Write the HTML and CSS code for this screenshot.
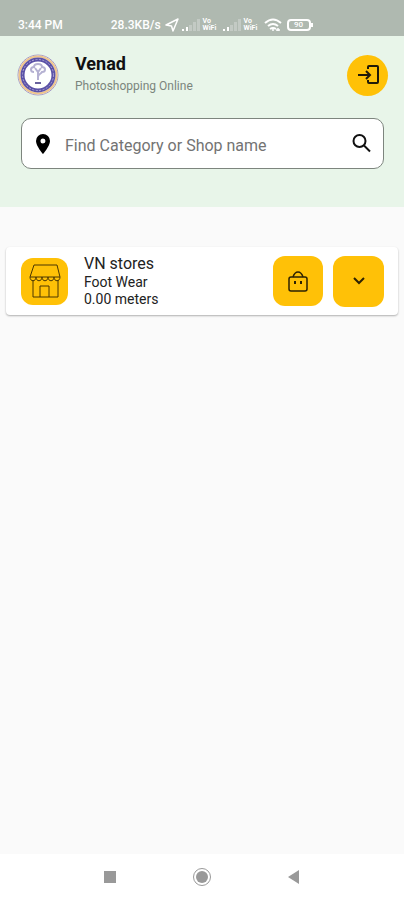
FILE: index.html
```html
<!DOCTYPE html>
<html lang="en">
<head>
  <meta charset="UTF-8" />
  <meta name="viewport" content="width=device-width, initial-scale=1.0" />
  <title>Venad</title>
  <link rel="stylesheet" href="styles.css">
</head>
<body>
  <div class="status-bar">
    <span class="time">3:44 PM</span>
    <span class="speed">28.3KB/s</span>
    <div class="status-icons">
      <svg width="14" height="14" viewBox="0 0 14 14"><path d="M1 7 13 1 8 13 6.500 8Z" fill="none" stroke="#fff" stroke-width="1.500" stroke-linejoin="round"/></svg>
      <svg width="18" height="12" viewBox="0 0 18 12" fill="#fff"><path d="M0 10h2v2H0zM4 8h2v4H4z"/><path d="M7 6h3v6H7zM11 3h3v9h-3zM15 0h3v12h-3z" opacity=".25"/></svg>
      <span class="vowifi">Vo<br>WiFi</span>
      <svg width="18" height="12" viewBox="0 0 18 12" fill="#fff"><path d="M0 10h2v2H0zM4 8h2v4H4z"/><path d="M7 6h3v6H7zM11 3h3v9h-3zM15 0h3v12h-3z" opacity=".25"/></svg>
      <span class="vowifi">Vo<br>WiFi</span>
      <svg width="18" height="14" viewBox="0 0 18 14" fill="none" stroke="#fff" stroke-width="2"><path d="M1 5Q9-2 17 5M4 8q5-4 10 0M6 11q3-2 6 0"/><path d="M9 11v2M14 10v3M12 12h4" stroke-width="1.500"/></svg>
      <span class="battery">90</span>
    </div>
  </div>

  <header>
    <div class="profile">
      <svg class="logo" width="42" height="42" viewBox="0 0 42 42">
        <circle cx="21" cy="21" r="20" fill="#fff" stroke="#a59cc8" stroke-width="1"/>
        <circle cx="21" cy="21" r="18.500" fill="none" stroke="#efc58c" stroke-width="2"/>
        <circle cx="21" cy="21" r="15.500" fill="#fff" stroke="#5b51a6" stroke-width="4"/>
        <circle cx="21" cy="21" r="15.500" fill="none" stroke="#a9a3d4" stroke-width="1" stroke-dasharray="2 1.500"/>
        <path d="M17 18c-4 0-4-5 0-5 0-4 8-4 8 0 4 0 4 5 0 5-1 2-4 2-4 5v3M18 14l3 4 3-4M21 17v7" fill="none" stroke="#b5b1d2" stroke-width="2"/>
        <path d="M18 29h6" stroke="#69629d" stroke-width="2"/>
      </svg>
      <div class="profile-text">
        <h1>Venad</h1>
        <p>Photoshopping Online</p>
      </div>
      <button class="login" type="button" aria-label="Log in">
        <svg width="24" height="24" viewBox="0 0 24 24" fill="none" stroke="#201a08" stroke-width="2"><path d="M12 6V4q0-1 1-1h8q1 0 1 1v15q0 1-1 1h-8q-1 0-1-1v-2M2 12h12M10 8l4 4-4 4"/></svg>
      </button>
    </div>

    <form class="search">
      <svg width="24" height="24" viewBox="0 0 24 24"><path d="M12 2a7 7 0 0 0-7 7c0 5 7 13 7 13s7-8 7-13a7 7 0 0 0-7-7zm0 9.500a2.500 2.500 0 1 1 0-5 2.500 2.500 0 0 1 0 5z"/></svg>
      <input type="text" aria-label="Find Category or Shop name" placeholder="Find Category or Shop name">
      <button type="submit" aria-label="Search">
        <svg width="24" height="24" viewBox="0 0 24 24" fill="none" stroke="#111" stroke-width="2"><circle cx="9.500" cy="9" r="6"/><path d="m14 13.500 6 6"/></svg>
      </button>
    </form>
  </header>

  <main>
    <article class="store">
      <div class="store-icon">
        <svg width="34" height="36" viewBox="0 0 34 36" fill="none" stroke="#4a3703" stroke-width="1"><path d="M6 2h23l3 12H2zM2 14c0 5 6 5 6 0 0 5 6 5 6 0 0 5 6 5 6 0 0 5 6 5 6 0 0 5 6 5 6 0M5 17v17h25V17M12 34V23h9v11"/></svg>
      </div>
      <div class="store-text">
        <h2>VN stores</h2>
        <p>Foot Wear</p>
        <p>0.00 meters</p>
      </div>
      <button class="bag" type="button" aria-label="Shop">
        <svg width="20" height="22" viewBox="0 0 20 22" fill="none" stroke="#2d2203" stroke-width="1.500"><rect x="1" y="7" width="18" height="14" rx="2"/><path d="M5 7c1-3 2-5 5-5s4 2 5 5"/><path d="M7 11v3M13 11v3" stroke-width="2"/></svg>
      </button>
      <button class="expand" type="button" aria-label="Show more">
        <svg width="12" height="8" viewBox="0 0 12 8" fill="none" stroke="#2d2203" stroke-width="2"><path d="m1 1 5 5 5-5"/></svg>
      </button>
    </article>
  </main>

  <nav>
    <button type="button" aria-label="Recent apps"><svg width="20" height="20" viewBox="0 0 20 20"><path d="M4 4h12v12H4z" fill="#999"/></svg></button>
    <button type="button" aria-label="Home"><svg width="20" height="20" viewBox="0 0 20 20"><circle cx="10" cy="10" r="8.500" fill="none" stroke="#999" stroke-width="1"/><circle cx="10" cy="10" r="6" fill="#999"/></svg></button>
    <button type="button" aria-label="Back"><svg width="20" height="20" viewBox="0 0 20 20"><path d="M15 3v14L4 10z" fill="#999"/></svg></button>
  </nav>
</body>
</html>
```

FILE: styles.css
```css
* {
  box-sizing: border-box;
}
body {
  margin: 0;
  min-height: 100vh;
  display: flex;
  flex-direction: column;
  font-family: Roboto, "Liberation Sans", sans-serif;
  background-color: #fafafa;
  color: #222;
}
h1, h2, p {
  margin: 0;
  font-weight: 400;
}
svg {
  display: block;
  flex: none;
}
button {
  display: flex;
  align-items: center;
  justify-content: center;
  flex: none;
  border: 0;
  padding: 0;
  background: none;
}
.status-bar {
  display: flex;
  align-items: center;
  height: 36px;
  padding: 14px 20px 0 18px;
  background-color: #afb9b0;
  color: #fff;
  font-size: 12px;
  font-weight: 500;
}
.speed {
  margin-left: 48px;
}
.status-icons {
  display: flex;
  align-items: center;
  gap: 3px;
  margin-left: 4px;
}
.vowifi {
  width: 17px;
  font-size: 7px;
  line-height: 7px;
  font-weight: 700;
}
.battery {
  position: relative;
  width: 24px;
  height: 12px;
  margin-left: 2px;
  border: 2px solid #fff;
  border-radius: 4px;
  font-size: 8px;
  line-height: 8px;
  text-align: center;
}
.battery::after {
  content: "";
  position: absolute;
  right: -4px;
  top: 2px;
  width: 2px;
  height: 4px;
  background-color: #fff;
}
header {
  padding: 17px 20px 38px 21px;
  background-color: #e8f5e9;
}
.profile {
  display: flex;
  align-items: center;
  margin: 0 -4px;
}
.profile-text {
  flex: 1;
  margin-left: 16px;
}
.profile h1 {
  font-size: 18px;
  line-height: 22px;
  font-weight: 700;
  color: #111;
}
.profile p {
  font-size: 12px;
  line-height: 22px;
  color: #7b857d;
}
.login {
  width: 41px;
  height: 41px;
  border-radius: 50%;
  background-color: #ffc107;
}
.search {
  display: flex;
  align-items: center;
  height: 51px;
  margin-top: 21px;
  padding: 0 9px;
  border: 1px solid #7d857e;
  border-radius: 10px;
  background-color: #fff;
}
.search input {
  flex: 1;
  min-width: 0;
  margin-left: 10px;
  padding: 4px 0 0;
  border: 0;
  outline: 0;
  background: none;
  font: inherit;
  font-size: 16px;
  line-height: 20px;
}
.search input::placeholder {
  color: #737373;
  opacity: 1;
}
main {
  flex: 1;
  padding: 40px 6px;
}
.store {
  display: flex;
  align-items: center;
  height: 68px;
  padding: 0 14px 0 15px;
  border-radius: 4px;
  background-color: #fff;
  box-shadow: 0 1px 2px rgba(0, 0, 0, 0.3);
}
.store-icon {
  display: flex;
  align-items: center;
  justify-content: center;
  width: 47px;
  height: 47px;
  border-radius: 12px;
  background-color: #ffc107;
}
.store-text {
  flex: 1;
  margin-left: 16px;
}
.store h2 {
  font-size: 16px;
  line-height: 20px;
}
.store p {
  font-size: 14px;
  line-height: 17px;
}
.bag, .expand {
  border-radius: 12px;
  background-color: #ffc107;
}
.bag {
  width: 50px;
  height: 50px;
}
.expand {
  width: 51px;
  height: 51px;
  margin-left: 10px;
}
nav {
  display: flex;
  align-items: center;
  justify-content: center;
  gap: 72px;
  height: 46px;
  background-color: #fff;
}
```
